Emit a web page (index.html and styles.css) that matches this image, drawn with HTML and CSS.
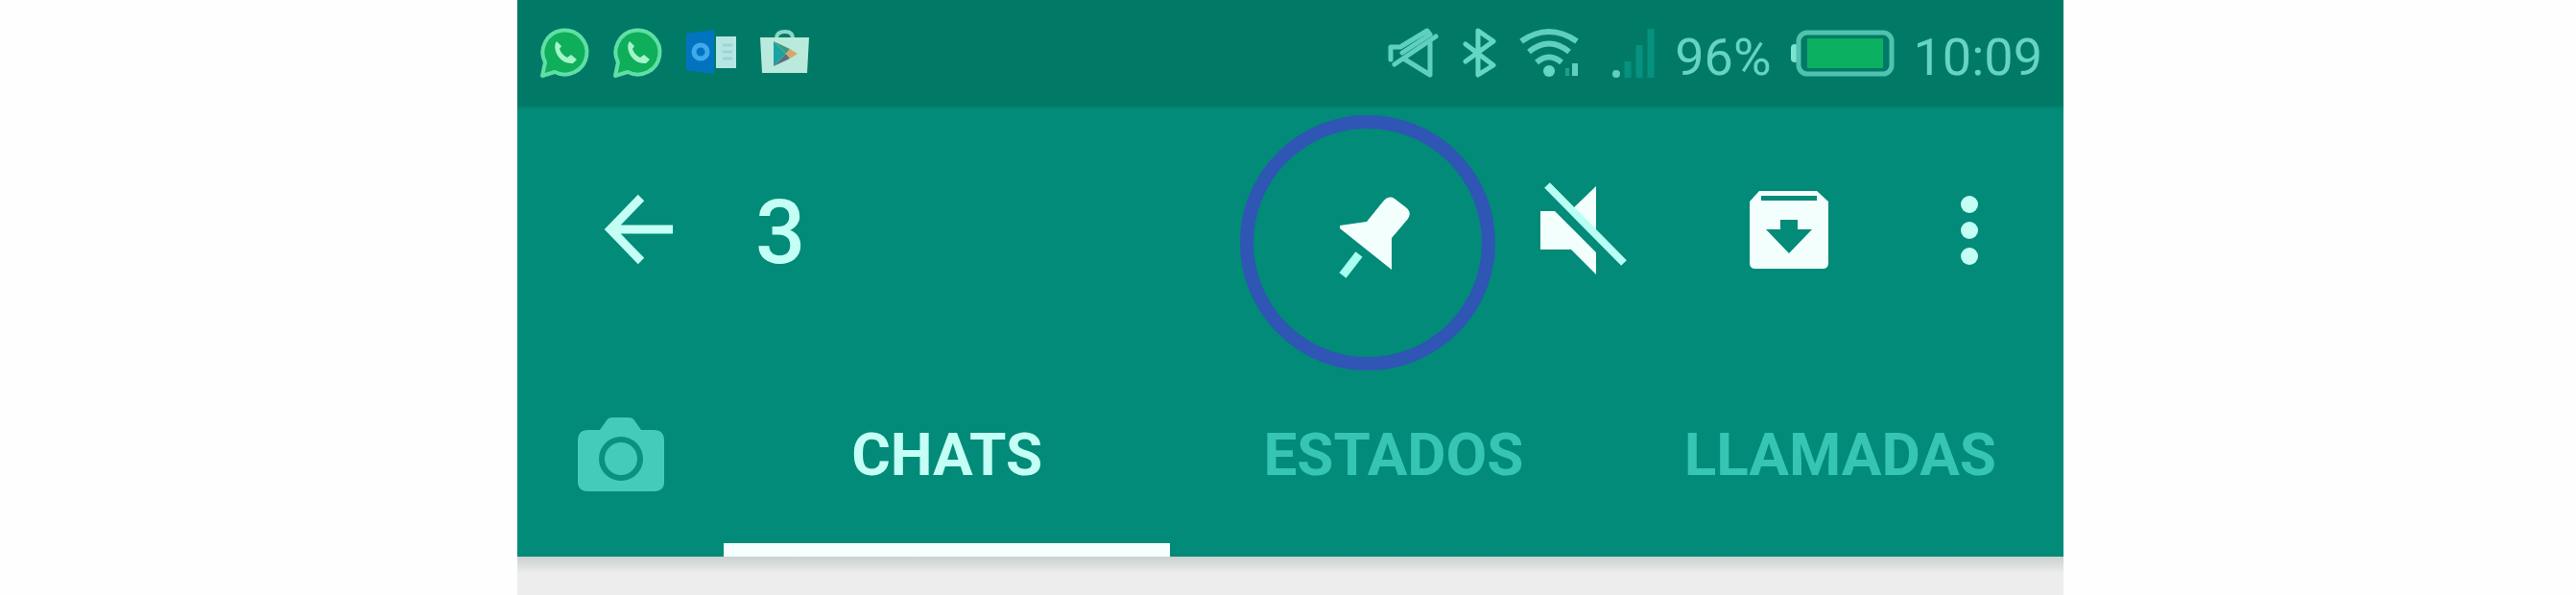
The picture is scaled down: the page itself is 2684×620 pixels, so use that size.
FILE: index.html
```html
<!DOCTYPE html>
<html lang="es">
<head>
  <meta charset="UTF-8" />
  <meta name="viewport" content="width=device-width, initial-scale=1.0" />
  <title>WhatsApp</title>
  <link rel="stylesheet" href="styles.css">
</head>
<body>
  <div class="pantalla">
    <div class="estado">
      <div class="notificaciones">
        <svg width="52" height="60" viewBox="0 0 52 60">
          <path d="M2 50 L5 36 A23 23 0 1 1 15 46 Z" fill="#0fae5a" stroke="#5fdfa6" stroke-width="4" stroke-linejoin="round" />
          <path d="M17 14 C12 20 18 38 34 37 L38 33 L32 28 L28 31 Q22 28 20 22 L22 19 Z" fill="#a5f5c9" />
        </svg>
        <svg width="52" height="60" viewBox="0 0 52 60">
          <path d="M2 50 L5 36 A23 23 0 1 1 15 46 Z" fill="#0fae5a" stroke="#5fdfa6" stroke-width="4" stroke-linejoin="round" />
          <path d="M17 14 C12 20 18 38 34 37 L38 33 L32 28 L28 31 Q22 28 20 22 L22 19 Z" fill="#a5f5c9" />
        </svg>
        <svg width="52" height="60" viewBox="0 0 52 60">
          <path d="M31 9 H52 V42 H31 Z" fill="#b5e6e4" />
          <path d="M38 18 H48 M38 25 H48 M38 32 H48" stroke="#9fd3d4" stroke-width="3" />
          <path d="M0 6 L29 2 V48 L0 44 Z" fill="#0274bf" />
          <circle cx="15" cy="25" r="7" fill="none" stroke="#3fa9ec" stroke-width="5" />
        </svg>
        <svg width="52" height="60" viewBox="0 0 52 60">
          <path d="M18 11 Q18 4 27 4 Q35 4 35 11" fill="none" stroke="#8ad9c5" stroke-width="4" />
          <path d="M1 10 H52 L50 47 H3 Z" fill="#b9eadb" />
          <path d="M15 14 L28 27 L15 40 Z" fill="#1ba3a3" />
          <path d="M15 14 L32 22 L28 27 Z" fill="#3c9d7c" />
          <path d="M15 40 L32 32 L28 27 Z" fill="#5b6f7c" />
          <path d="M32 22 L40 27 L32 32 L28 27 Z" fill="#d9a56c" />
        </svg>
      </div>
      <div class="sistema">
        <svg width="58" height="60" viewBox="0 0 58 60" fill="none" stroke="#5fd0bf" stroke-width="5" stroke-linejoin="round" stroke-linecap="round">
          <path d="M4 33 V20 H14 L42 3 L45 7 L16 26" />
          <path d="M51 9 L8 38" />
          <path d="M19 33 L45 49 V15" />
        </svg>
        <svg width="40" height="60" viewBox="0 0 40 60" fill="none" stroke="#66d6c4" stroke-width="5" stroke-linejoin="round" stroke-linecap="round">
          <path d="M4 17 L33 39 L17 49 V3 L33 14 L4 35" />
        </svg>
        <svg width="76" height="60" viewBox="0 0 76 60" fill="none" stroke="#5fd0bf" stroke-width="6">
          <path d="M2 14 Q31 -6 60 14" />
          <path d="M10 25 Q31 8 52 25" />
          <path d="M18 36 Q31 25 44 36" />
          <circle cx="31" cy="45" r="6" fill="#66d6c4" stroke="none" />
          <path d="M50 42 V50" stroke="#20a08c" stroke-width="4" />
          <path d="M58 37 V50" />
        </svg>
        <svg width="46" height="60" viewBox="0 0 46 60">
          <circle cx="5" cy="48" r="4" fill="#5fd0bf" />
          <path d="M17 35 V52 M29 18 V52 M41 1 V52" stroke="#069180" stroke-width="7" />
        </svg>
        <span>96%</span>
        <svg width="108" height="60" viewBox="0 0 108 60">
          <rect x="0" y="17" width="8" height="19" rx="4" fill="#7be3d0" />
          <rect x="8" y="5" width="97" height="43" rx="9" fill="none" stroke="#4fc3ae" stroke-width="5" />
          <rect x="17" y="11" width="79" height="31" fill="#0bb060" />
        </svg>
        <span>10:09</span>
      </div>
    </div>

    <header class="barra">
      <button class="icono" aria-label="Volver">
        <svg width="96" height="96" viewBox="0 0 96 96" fill="none" stroke="#c4fff5" stroke-width="9">
          <path d="M49 14 L17 47 L49 80 M17 47 H82" />
        </svg>
      </button>
      <h1>3</h1>
      <div class="acciones">
        <button class="icono fijar" aria-label="Fijar">
          <svg width="96" height="96" viewBox="0 0 96 96" fill="#f2fffd">
            <path d="M55 18 Q61 11 67 15 L80 25 Q85 30 81 36 L64 56 V89 L10 46 V43 L38 39 Z" />
            <path d="M30 73 L13 95" stroke="#a6fff0" stroke-width="9" />
          </svg>
        </button>
        <button class="icono" aria-label="Silenciar">
          <svg width="96" height="96" viewBox="0 0 96 96" fill="#f2fffd">
            <path d="M5 28 H20 L63 71 V94 L37 68 H5 Z" />
            <path d="M38 26 L63 2 V51 Z" />
            <path d="M12 1 L92 82" stroke="#b9fff4" stroke-width="8" />
          </svg>
        </button>
        <button class="icono" aria-label="Archivar">
          <svg width="96" height="96" viewBox="0 0 96 96" fill="#f2fffd">
            <path fill-rule="evenodd" d="M19 7 H79 L91 18 V82 Q91 88 85 88 H15 Q9 88 9 82 V18 Z M21 12 V17 H79 V12 Z M41 37 V47 H26 L50 72 L74 47 H59 V37 Z" />
          </svg>
        </button>
        <button class="icono mas" aria-label="Más opciones">
          <svg width="48" height="96" viewBox="0 0 48 96" fill="#c4fff5">
            <circle cx="24" cy="21" r="9" />
            <circle cx="24" cy="48" r="9" />
            <circle cx="24" cy="75" r="9" />
          </svg>
        </button>
      </div>
    </header>

    <nav class="pestanas">
      <a href="#camara" aria-label="Cámara">
        <svg width="92" height="80" viewBox="0 0 92 80" fill="#45cbb9">
          <path d="M12 14 H24 L31 4 Q33 1 37 1 H54 Q58 1 60 4 L67 14 H80 Q91 14 91 25 V68 Q91 78 80 78 H12 Q1 78 1 68 V25 Q1 14 12 14 Z" />
          <circle cx="46" cy="44" r="20" fill="none" stroke="#0b917f" stroke-width="6" />
        </svg>
      </a>
      <a href="#chats" class="activo">CHATS</a>
      <a href="#estados">ESTADOS</a>
      <a href="#llamadas">LLAMADAS</a>
    </nav>

    <main class="lista"></main>
  </div>
</body>
</html>
```

FILE: styles.css
```css
* {
  box-sizing: border-box;
}

body {
  margin: 0;
  padding-left: 5px;
  font-family: Roboto, sans-serif;
  background-color: #fefefe;
}

svg {
  display: block;
  overflow: visible;
}

.pantalla {
  display: flex;
  flex-direction: column;
  width: 100%;
  max-width: 1611px;
  min-height: 100vh;
  margin: 0 auto;
  background-color: #028b78;
}

.estado {
  display: flex;
  justify-content: space-between;
  align-items: center;
  height: 114px;
  padding: 4px 22px 0 24px;
  background: linear-gradient(#007a67 110px, #028b78);
  color: #66d3c3;
  font-size: 54px;
}

.notificaciones,
.sistema {
  display: flex;
  align-items: center;
}

.notificaciones {
  gap: 24px;
}

.sistema {
  gap: 20px;
}

.barra {
  display: flex;
  align-items: center;
  height: 251px;
  padding: 0 74px 0 80px;
}

.barra h1 {
  margin: 0 0 0 72px;
  padding-top: 6px;
  font-size: 92px;
  font-weight: 500;
  color: #c4fff5;
}

.acciones {
  display: flex;
  gap: 118px;
  margin-left: auto;
}

.icono {
  position: relative;
  width: 96px;
  height: 96px;
  padding: 0;
  border: none;
  background: none;
  cursor: pointer;
}

.mas {
  width: 48px;
}

/* círculo que resalta el botón de fijar */
.fijar::after {
  content: "";
  position: absolute;
  top: -72px;
  left: -94px;
  box-sizing: border-box;
  width: 266px;
  height: 266px;
  border: 14px solid #2f55b5;
  border-radius: 50%;
  pointer-events: none;
}

.pestanas {
  display: grid;
  grid-template-columns: 215px 1fr 1fr 1fr;
  height: 215px;
}

.pestanas a {
  display: flex;
  justify-content: center;
  align-items: center;
  padding-top: 2px;
  color: #36c5b2;
  font-size: 62px;
  font-weight: 700;
  text-decoration: none;
}

.pestanas .activo {
  color: #c4fff5;
  box-shadow: inset 0 -14px #f4fffe;
}

.lista {
  flex: 1;
  background: linear-gradient(#cbd0cf, #ededee 18px);
}
```
